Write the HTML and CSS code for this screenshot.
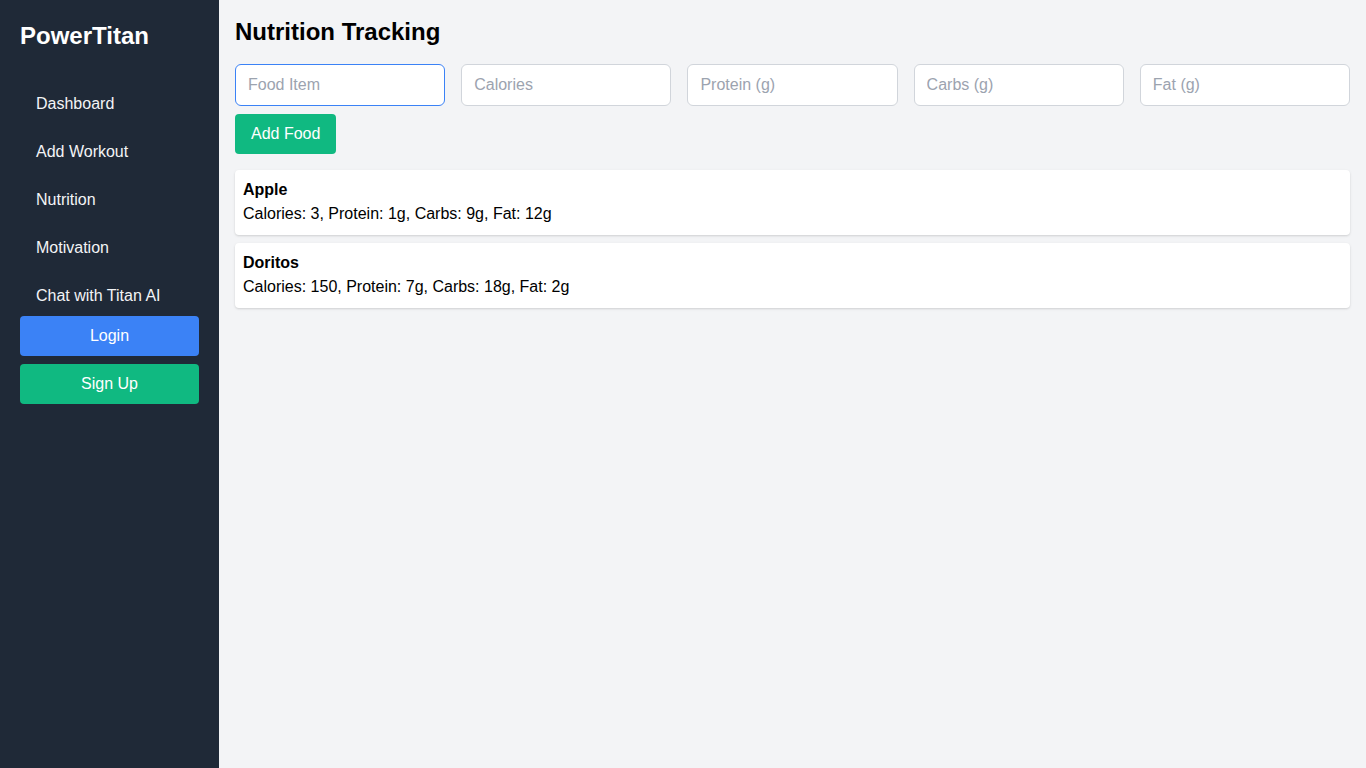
FILE: index.html
```html
<!DOCTYPE html>
<html lang="en">
<head>
<meta charset="utf-8">
<title>PowerTitan - Nutrition</title>
<link rel="stylesheet" href="styles.css">
</head>
<body>
<div class="app">
  <aside class="sidebar">
    <div class="brand">PowerTitan</div>
    <nav class="nav">
      <a class="nav-item" href="#">Dashboard</a>
      <a class="nav-item" href="#">Add Workout</a>
      <a class="nav-item" href="#">Nutrition</a>
      <a class="nav-item" href="#">Motivation</a>
      <a class="nav-item" href="#">Chat with Titan AI</a>
    </nav>
    <div class="auth">
      <button class="btn btn-login">Login</button>
      <button class="btn btn-signup">Sign Up</button>
    </div>
  </aside>
  <main class="main">
    <h1 class="title">Nutrition Tracking</h1>
    <div class="form-row">
      <input class="field field-focus" type="text" placeholder="Food Item" autofocus>
      <input class="field" type="text" placeholder="Calories">
      <input class="field" type="text" placeholder="Protein (g)">
      <input class="field" type="text" placeholder="Carbs (g)">
      <input class="field" type="text" placeholder="Fat (g)">
    </div>
    <button class="btn btn-add">Add Food</button>
    <div class="list">
      <div class="card">
        <div class="card-name">Apple</div>
        <div class="card-info">Calories: 3, Protein: 1g, Carbs: 9g, Fat: 12g</div>
      </div>
      <div class="card">
        <div class="card-name">Doritos</div>
        <div class="card-info">Calories: 150, Protein: 7g, Carbs: 18g, Fat: 2g</div>
      </div>
    </div>
  </main>
</div>
</body>
</html>
```

FILE: styles.css
```css
* { box-sizing: border-box; }
html, body {
  margin: 0;
  padding: 0;
  height: 100%;
}
body {
  font-family: "Liberation Sans", Arial, sans-serif;
  font-size: 16px;
  line-height: 1.5;
  color: #000;
}
.app {
  display: flex;
  min-height: 768px;
}
.sidebar {
  width: 219px;
  flex-shrink: 0;
  background: #1f2937;
  color: #fff;
  padding: 20px;
  display: flex;
  flex-direction: column;
}
.brand {
  font-size: 24px;
  line-height: 32px;
  font-weight: 700;
  margin-bottom: 32px;
}
.nav {
  display: flex;
  flex-direction: column;
  gap: 8px;
}
.nav-item {
  display: block;
  padding: 8px 16px;
  color: #f3f4f6;
  text-decoration: none;
  border-radius: 4px;
}
.auth {
  display: flex;
  flex-direction: column;
  gap: 8px;
}
.btn {
  font-family: inherit;
  font-size: 16px;
  line-height: 24px;
  border: none;
  border-radius: 4px;
  padding: 8px 16px;
  color: #fff;
  cursor: pointer;
}
.btn-login { background: #3b82f6; width: 100%; }
.btn-signup { background: #10b981; width: 100%; }
.main {
  flex: 1;
  min-width: 0;
  background: #f3f4f6;
  padding: 16px;
}
.title {
  margin: 0 0 16px;
  font-size: 24px;
  line-height: 32px;
  font-weight: 700;
}
.form-row {
  display: flex;
  gap: 16px;
}
.field {
  flex: 1 1 0;
  min-width: 0;
  width: 0;
  height: 42px;
  padding: 8px 12px;
  font-family: inherit;
  font-size: 16px;
  border: 1px solid #d1d5db;
  border-radius: 6px;
  background: #fff;
  color: #111827;
  caret-color: #111827;
  outline: none;
}
.field::placeholder { color: #9ca3af; }
.field-focus,
.field:focus { border-color: #3b82f6; outline: none; }
.btn-add {
  margin-top: 8px;
  background: #10b981;
  display: inline-block;
}
.list {
  margin-top: 16px;
  display: flex;
  flex-direction: column;
  gap: 8px;
}
.card {
  background: #fff;
  padding: 8px 8px 9px;
  border-radius: 4px;
  box-shadow: 0 1px 3px rgba(0,0,0,0.1), 0 1px 2px rgba(0,0,0,0.06);
}
.card-name { font-weight: 700; }
```
